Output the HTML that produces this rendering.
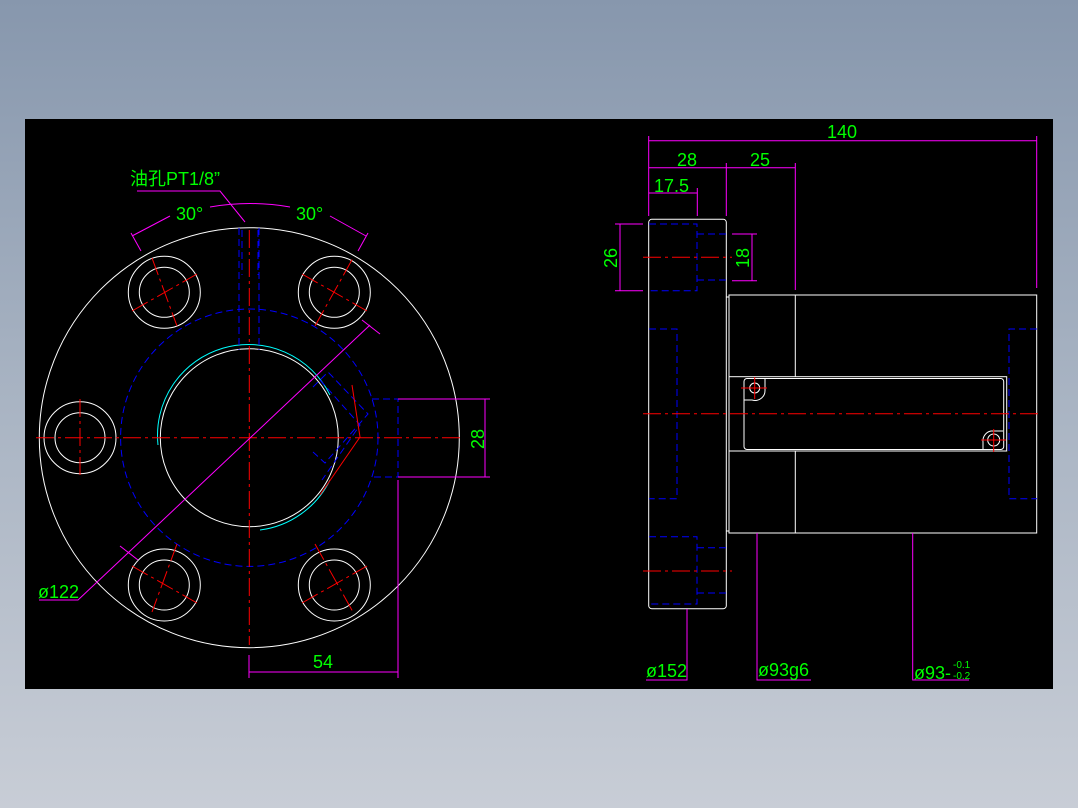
<!DOCTYPE html>
<html><head><meta charset="utf-8"><style>
html,body{margin:0;padding:0;width:1078px;height:808px;overflow:hidden;background:linear-gradient(#8797ad,#a9b4c3 50%,#c8cdd6);}
svg{position:absolute;left:0;top:0}
text{font-family:"Liberation Sans","Noto Sans CJK SC",sans-serif;fill:#00ff00;font-size:18px}
</style></head><body>
<svg width="1078" height="808" viewBox="0 0 1078 808">
<rect x="25" y="119" width="1028" height="570" fill="#000"/>
<g fill="none" stroke-width="1">
<g stroke="#fff">
<circle cx="249.3" cy="437.7" r="210"/>
<circle cx="249.3" cy="437.7" r="89"/>
<circle cx="164.3" cy="292.3" r="36"/><circle cx="164.3" cy="292.3" r="25"/>
<circle cx="334.3" cy="292.3" r="36"/><circle cx="334.3" cy="292.3" r="25"/>
<circle cx="164.3" cy="585" r="36"/><circle cx="164.3" cy="585" r="25"/>
<circle cx="334.3" cy="585" r="36"/><circle cx="334.3" cy="585" r="25"/>
<circle cx="80" cy="437.7" r="36"/><circle cx="80" cy="437.7" r="25"/>
</g>
<path d="M158 445 A91 91 0 0 1 330 395 M330 480 A91 91 0 0 1 260 530" stroke="#0ff"/>
<g stroke="#0000ff" stroke-dasharray="7,4">
<circle cx="249.3" cy="437.7" r="128.7"/>
<path d="M372 399 H398 V477 H372 M239 228 V350 M259 228 V350 M242 230 V275 M258 230 V275"/>
<path d="M313 387 L328 372 L368 414 L325 463 L313 452 M320 380 L360 425 L322 480"/>
</g>
<g stroke="#f00" stroke-dasharray="18,4,3,4">
<path d="M36 437.7 H462 M249.3 230 V645"/>
<path d="M132 311 L197 274 M152 258 L177 326 M302 274 L367 311 M315 326 L353 258 M132 566 L197 603 M177 544 L152 612 M302 603 L367 566 M315 544 L353 612 M80 399 V476"/>
</g>
<path d="M352 385 L360 437 L320 495" stroke="#f00"/>
<g stroke="#f0f">
<path d="M370 325 L129 552 L78 600 H39"/>
<path d="M120 546 L138 560 M362 320 L380 334"/>
<path d="M132 236 L170 216 M210 207 A233 233 0 0 1 290 207 M330 216 L366 236 M141 251 L131 233 M358 251 L368 233"/>
<path d="M137 191 H220 L245 222"/>
<path d="M398 399 H490 M398 477 H490 M485 399 V477 M249 655 V678 M398 480 V678 M249 672 H398"/>
</g>
<text x="130" y="185">油孔PT1/8”</text>
<text x="176" y="220">30°</text>
<text x="296" y="220">30°</text>
<text x="38" y="598">ø122</text>
<text x="313" y="668">54</text>
<text transform="translate(484,449) rotate(-90)">28</text>
<g stroke="#fff">
<rect x="648.7" y="219.3" width="77.6" height="389.4" rx="3"/>
<path d="M726.3 297 H729 V531 H726.3"/>
<rect x="729" y="295" width="307.7" height="238"/>
<path d="M795.3 295 V377 M795.3 451 V533"/>
<rect x="729" y="376.7" width="277.7" height="74.3"/>
<rect x="744" y="378.5" width="259.7" height="71" rx="3"/>
<path d="M744 400 H752 A10 10 0 0 0 765 390 V379 M1003 431 H991 A10 10 0 0 0 983 442 V449"/>
<circle cx="754.7" cy="388" r="5"/><circle cx="993.7" cy="440" r="6"/>
</g>
<g stroke="#0000ff" stroke-dasharray="7,4">
<path d="M649 224 H697 V290.7 H649 M697 234 H726 M697 280 H726"/>
<path d="M649 329 H677 V498.7 H649 M1037 329 H1009 V498.7 H1037"/>
<path d="M649 536.7 H697 V604 H649 M697 547.7 H726 M697 593 H726"/>
</g>
<g stroke="#f00" stroke-dasharray="18,4,3,4">
<path d="M643 413.7 H1042 M643 257.3 H732 M643 571 H732"/>
</g>
<path d="M741 388 H767 M754.7 377 V399 M981 440 H1006 M993.7 429 V452" stroke="#f00"/>
<g stroke="#f0f">
<path d="M648.7 136 V216 M1036.7 136 V288 M648.7 140.7 H1036.7 M726.3 163 V216 M795.3 163 V290 M648.7 167.7 H795.3 M697.3 188 V216 M648.7 193 H697.3"/>
<path d="M615 224 H643 M615 290.7 H643 M620 224 V290.7 M732 234 H757 M732 280.7 H757 M752 234 V280.7"/>
<path d="M687 609 V680 H646 M757 533 V680 H811 M912.7 533 V680 H969"/>
</g>
<text x="827" y="138">140</text>
<text x="677" y="166">28</text>
<text x="750" y="166">25</text>
<text x="654" y="192">17.5</text>
<text transform="translate(617,268) rotate(-90)">26</text>
<text transform="translate(749,268) rotate(-90)">18</text>
<text x="646" y="677">ø152</text>
<text x="758" y="676">ø93g6</text>
<text x="914" y="679">ø93-</text>
<text x="953" y="668" style="font-size:10px">-0.1</text>
<text x="953" y="679" style="font-size:10px">-0.2</text>
</g>
</svg>
</body></html>
